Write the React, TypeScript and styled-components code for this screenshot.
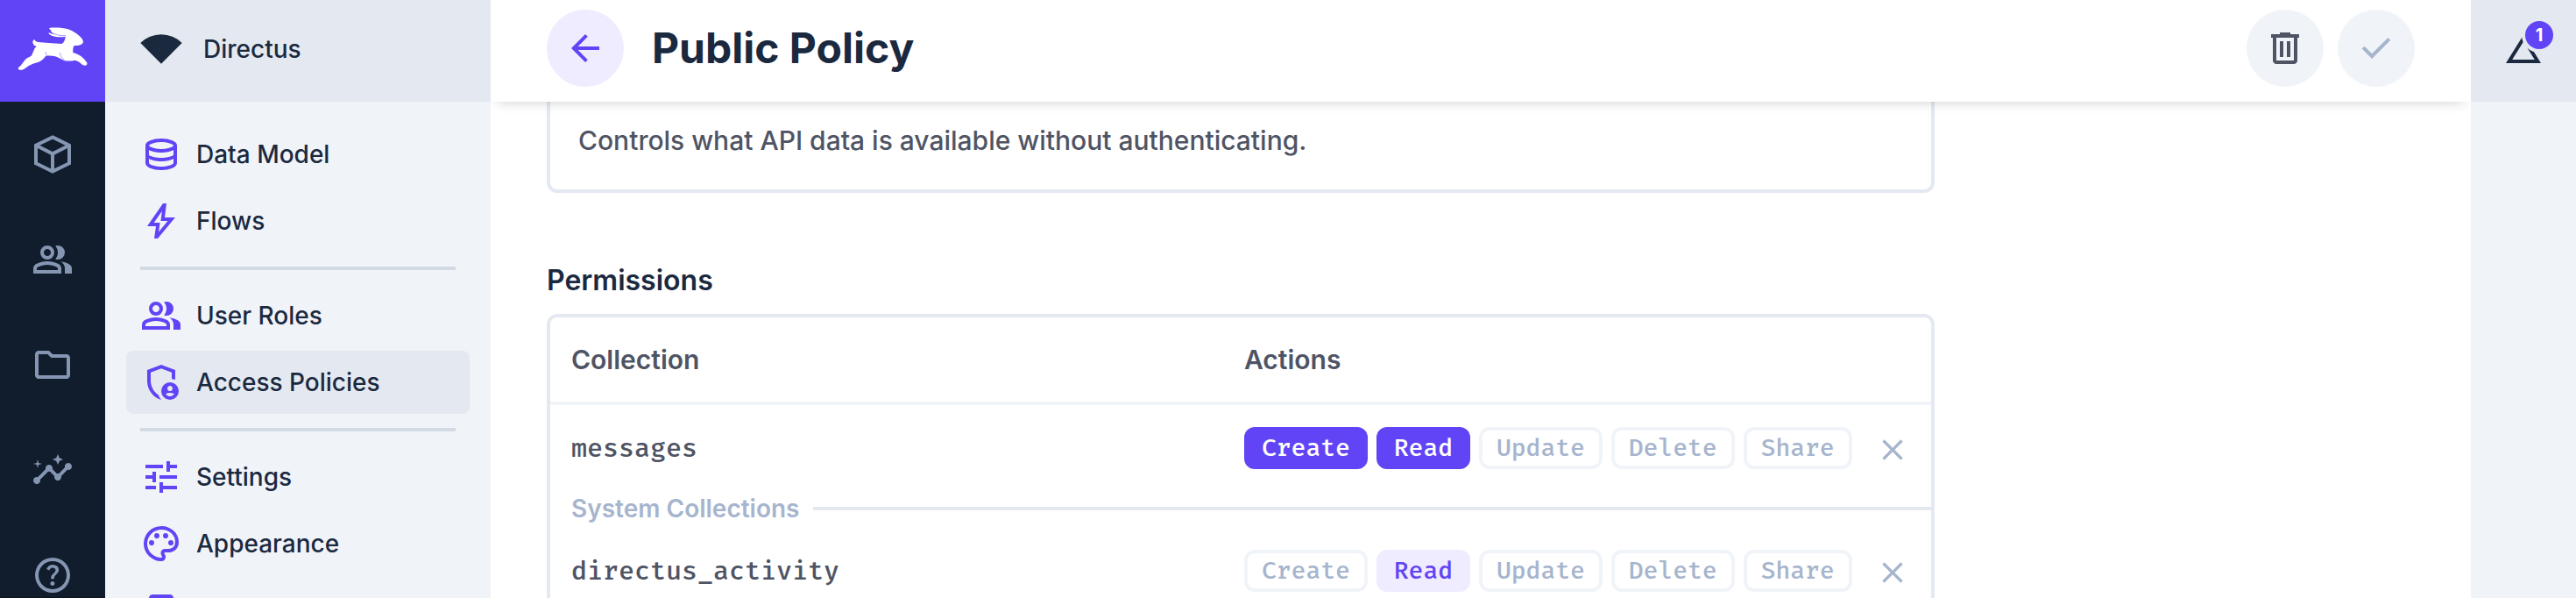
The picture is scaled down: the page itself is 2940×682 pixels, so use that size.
import React from 'react';
import styled, { createGlobalStyle, css } from 'styled-components';
import { MdInsights, MdTune } from 'react-icons/md';

const c = {
  primary: '#6144f6',
  primarySoft: '#f0ecff',
  rail: '#111c2c',
  railEdge: '#0d1521',
  railIcon: '#8496b2',
  subtle: '#f0f4f9',
  normal: '#e4e9f1',
  accent: '#d3dae4',
  strong: '#1b293f',
  text: '#4f5464',
  subdued: '#a6b5cd',
};
const sans = `Inter, "Liberation Sans", sans-serif`;
const mono = `"Fira Mono", "DejaVu Sans Mono", monospace`;

const Global = createGlobalStyle`
  *, *::before, *::after { box-sizing: border-box; }
  body { margin: 0; background: #fff; color: ${c.text}; font: 500 28px/40px ${sans}; }
  button { font: inherit; border: 0; padding: 0; background: none; cursor: pointer; }
  a { color: inherit; text-decoration: none; }
`;

const Page = styled.div`
  display: flex;
  height: 100vh;
  overflow: hidden;
`;

const Rail = styled.nav`
  flex: 0 0 120px;
  background: ${c.rail};
  border-bottom: 1px solid ${c.railEdge};
  overflow: hidden;
`;
const Logo = styled.a`
  display: flex;
  align-items: center;
  justify-content: center;
  height: 116px;
  padding-bottom: 4px;
  background: ${c.primary};
  color: #fff;
`;
const RailLink = styled.a`
  display: flex;
  align-items: center;
  justify-content: center;
  height: 120px;
  color: ${c.railIcon};
`;

const Nav = styled.nav`
  flex: 0 0 440px;
  background: ${c.subtle};
  color: ${c.strong};
  overflow: hidden;
`;
const Project = styled.div`
  display: flex;
  align-items: center;
  gap: 24px;
  height: 116px;
  padding: 0 40px 4px;
  background: ${c.normal};
`;
const NavList = styled.div`
  display: flex;
  flex-direction: column;
  gap: 4px;
  padding: 24px;
`;
const NavLink = styled.a<{ $active?: boolean }>`
  display: flex;
  align-items: center;
  gap: 16px;
  height: 72px;
  padding: 0 16px;
  border-radius: 8px;
  background: ${(p) => (p.$active ? c.normal : 'transparent')};
  svg { color: ${c.primary}; }
`;
const Divider = styled.hr`
  width: auto;
  height: 4px;
  margin: 12px 16px;
  border: 0;
  background: ${c.accent};
`;

const Main = styled.main`
  flex: 1;
  min-width: 0;
  overflow: hidden;
`;
const Header = styled.header`
  position: relative;
  z-index: 1;
  display: flex;
  align-items: center;
  gap: 16px;
  height: 116px;
  padding: 0 64px 6px;
  background: #fff;
  box-shadow: 0 8px 14px -8px rgba(0, 0, 0, 0.2);
`;
const Title = styled.h1`
  flex: 1;
  margin: 0 0 0 16px;
  color: ${c.strong};
  font-size: 48px;
  line-height: 56px;
  font-weight: 700;
`;
const RoundButton = styled.button<{ $kind: 'primary' | 'plain' | 'disabled' }>`
  display: flex;
  align-items: center;
  justify-content: center;
  width: 88px;
  height: 88px;
  border-radius: 50%;
  background: ${(p) => (p.$kind === 'primary' ? c.primarySoft : c.subtle)};
  color: ${(p) => ({ primary: c.primary, plain: c.text, disabled: c.subdued })[p.$kind]};
`;

const Form = styled.div`
  max-width: 1712px;
  padding: 0 64px;
`;
const Description = styled.textarea`
  display: block;
  width: 100%;
  height: 104px;
  padding: 22px 32px;
  border: 4px solid ${c.normal};
  border-top: 0;
  border-radius: 0 0 12px 12px;
  background: #fff;
  color: ${c.text};
  font: 500 30px/44px ${sans};
  resize: none;
  outline: 0;
  overflow: hidden;
`;
const Label = styled.h2`
  margin: 78px 0 16px;
  color: ${c.strong};
  font-size: 32px;
  line-height: 44px;
  font-weight: 600;
`;
const Frame = styled.div`
  border: 4px solid ${c.normal};
  border-radius: 12px;
  overflow: hidden;
`;
const Table = styled.table`
  width: 100%;
  table-layout: fixed;
  border-spacing: 0;
`;
const Col = styled.col<{ $w?: number }>`
  ${(p) => p.$w && css`width: ${p.$w}px;`}
`;
const HeadCell = styled.th`
  height: 100px;
  padding: 0;
  border-bottom: 4px solid ${c.subtle};
  text-align: left;
  font-size: 30px;
  font-weight: 600;
  &:first-child { padding-left: 24px; }
`;
const Cell = styled.td`
  height: 98px;
  padding: 0;
`;
const NameCell = styled(Cell)`
  padding-left: 24px;
  font-family: ${mono};
  font-size: 30px;
`;
const GroupCell = styled.td`
  height: 42px;
  padding: 0 0 2px 24px;
`;
const Group = styled.div`
  display: flex;
  align-items: center;
  gap: 16px;
  color: ${c.subdued};
  font-weight: 600;
  &::after { content: ''; flex: 1; height: 4px; background: ${c.normal}; }
`;
const Chips = styled.div`
  display: flex;
  gap: 10px;
`;
type Level = 'none' | 'full' | 'app';
const Chip = styled.button<{ $level: Level }>`
  height: 48px;
  padding: 0 16px;
  border: 4px solid;
  border-radius: 12px;
  font: 500 28px/40px ${mono};
  ${(p) => ({
    none: css`background: #fff; border-color: ${c.subtle}; color: ${c.subdued};`,
    full: css`background: ${c.primary}; border-color: ${c.primary}; color: #fff;`,
    app: css`background: ${c.primarySoft}; border-color: ${c.primarySoft}; color: ${c.primary};`,
  })[p.$level]}
`;
const Remove = styled.button`
  display: block;
  height: 44px;
  padding: 4px 10px 0;
  color: ${c.subdued};
  svg { display: block; }
`;

const Sidebar = styled.aside`
  flex: 0 0 120px;
  background: ${c.subtle};
`;
const SidebarHead = styled.button`
  display: flex;
  align-items: center;
  justify-content: center;
  width: 100%;
  height: 116px;
  padding-bottom: 4px;
  background: ${c.normal};
  color: ${c.strong};
`;
const BadgeAnchor = styled.span`
  position: relative;
  display: flex;
`;
const Badge = styled.span`
  position: absolute;
  top: -8px;
  right: -10px;
  width: 32px;
  height: 32px;
  border-radius: 50%;
  background: ${c.primary};
  box-shadow: 0 0 0 4px ${c.normal};
  color: #fff;
  font-size: 20px;
  line-height: 32px;
  font-weight: 700;
  text-align: center;
`;

const paths = {
  people: 'M1 20v-2.8q0-.85.438-1.562T2.6 14.55q1.55-.775 3.15-1.163T9 13t3.25.388t3.15 1.162q.725.375 1.163 1.088T17 17.2V20zm18 0v-3q0-1.1-.612-2.113T16.65 13.15q1.275.15 2.4.513t2.1.887q.9.5 1.375 1.112T23 17v3zM9 12q-1.65 0-2.825-1.175T5 8t1.175-2.825T9 4t2.825 1.175T13 8t-1.175 2.825T9 12m10-4q0 1.65-1.175 2.825T15 12q-.275 0-.7-.062t-.7-.138q.675-.8 1.038-1.775T15 8t-.362-2.025T13.6 4.2q.35-.125.7-.163T15 4q1.65 0 2.825 1.175T19 8M3 18h12v-.8q0-.275-.137-.5t-.363-.35q-1.35-.675-2.725-1.012T9 15t-2.775.338T3.5 16.35q-.225.125-.363.35T3 17.2zm6-8q.825 0 1.413-.587T11 8t-.587-1.412T9 6t-1.412.588T7 8t.588 1.413T9 10',
  folder: 'M4 20q-.825 0-1.412-.587T2 18V6q0-.825.588-1.412T4 4h6l2 2h8q.825 0 1.413.588T22 8v10q0 .825-.587 1.413T20 20zm0-2h16V8h-8.825l-2-2H4z',
  help: 'M11.95 18q.525 0 .888-.363t.362-.887t-.362-.888t-.888-.362t-.887.363t-.363.887t.363.888t.887.362m-.9-3.85h1.85q0-.825.188-1.3t1.062-1.3q.65-.65 1.025-1.238T15.55 8.9q0-1.4-1.025-2.15T12.1 6q-1.425 0-2.312.75T8.55 8.55l1.65.65q.125-.45.563-.975T12.1 7.7q.8 0 1.2.438t.4.962q0 .5-.3.938t-.75.812q-1.1.975-1.35 1.475t-.25 1.825M12 22q-2.075 0-3.9-.788t-3.175-2.137T2.788 15.9T2 12t.788-3.9t2.137-3.175T8.1 2.788T12 2t3.9.788t3.175 2.137T21.213 8.1T22 12t-.788 3.9t-2.137 3.175t-3.175 2.138T12 22m0-2q3.35 0 5.675-2.325T20 12t-2.325-5.675T12 4T6.325 6.325T4 12t2.325 5.675T12 20',
  database: 'M12 21q-3.775 0-6.387-1.162T3 17V7q0-1.65 2.638-2.825T12 3t6.363 1.175T21 7v10q0 1.675-2.613 2.838T12 21m0-11.975q2.225 0 4.475-.638T19 7.025q-.275-.725-2.512-1.375T12 5q-2.275 0-4.462.638T5 7.025q.35.75 2.538 1.375T12 9.025M12 14q1.05 0 2.025-.1t1.863-.288t1.675-.462T19 12.525v-3q-.65.35-1.437.625t-1.675.463t-1.863.287T12 11t-2.05-.1t-1.888-.288T6.4 10.15T5 9.525v3q.625.35 1.4.625t1.663.463t1.887.287T12 14m0 5q1.15 0 2.338-.175t2.187-.462t1.675-.65t.8-.738v-2.45q-.65.35-1.437.625t-1.675.463t-1.863.287T12 16t-2.05-.1t-1.888-.288T6.4 15.15T5 14.525V17q.125.375.788.725t1.662.638t2.2.462T12 19',
  bolt: 'm10.55 18.2l5.175-6.2h-4l.725-5.675L7.825 13H11.3zM8 22l1-7H4l9-13h2l-1 8h6L10 22z',
  policy: 'M17 17q.625 0 1.063-.437T18.5 15.5t-.437-1.062T17 14t-1.062.438T15.5 15.5t.438 1.063T17 17m0 3q.775 0 1.425-.363t1.05-.962q-.55-.325-1.175-.5T17 18t-1.3.175t-1.175.5q.4.6 1.05.963T17 20m-5 2q-3.475-.875-5.737-3.988T4 11.1V5l8-3l8 3v5.675q-.475-.2-.975-.363T18 10.076V6.4l-6-2.25L6 6.4v4.7q0 1.175.313 2.35t.875 2.238T8.55 17.65t1.775 1.5q.275.8.725 1.525t1.025 1.3q-.025 0-.037.013T12 22m5 0q-2.075 0-3.537-1.463T12 17t1.463-3.537T17 12t3.538 1.463T22 17t-1.463 3.538T17 22',
  palette: 'M12 22q-2.05 0-3.875-.788t-3.187-2.15t-2.15-3.187T2 12q0-2.075.813-3.9t2.2-3.175T8.25 2.788T12.2 2q2 0 3.775.688t3.113 1.9t2.125 2.875T22 11.05q0 2.875-1.75 4.413T16 17h-1.85q-.225 0-.312.125t-.088.275q0 .3.375.863t.375 1.287q0 1.25-.687 1.85T12 22m-5.5-9q.65 0 1.075-.425T8 11.5t-.425-1.075T6.5 10t-1.075.425T5 11.5t.425 1.075T6.5 13m3-4q.65 0 1.075-.425T11 7.5t-.425-1.075T9.5 6t-1.075.425T8 7.5t.425 1.075T9.5 9m5 0q.65 0 1.075-.425T16 7.5t-.425-1.075T14.5 6t-1.075.425T13 7.5t.425 1.075T14.5 9m3 4q.65 0 1.075-.425T19 11.5t-.425-1.075T17.5 10t-1.075.425T16 11.5t.425 1.075T17.5 13M12 20q.225 0 .363-.125t.137-.325q0-.35-.375-.825T11.75 17.3q0-1.05.725-1.675T14.25 15H16q1.65 0 2.825-.962T20 11.05q0-3.025-2.312-5.038T12.2 4Q8.8 4 6.4 6.325T4 12q0 3.325 2.338 5.663T12 20',
  bookmark: 'M5 21V5q0-.825.588-1.412T7 3h10q.825 0 1.413.588T19 5v16l-7-3zm2-3.05l5-2.15l5 2.15V5H7z',
  back: 'm7.825 13l5.6 5.6L12 20l-8-8l8-8l1.425 1.4l-5.6 5.6H20v2z',
  trash: 'M7 21q-.825 0-1.412-.587T5 19V6H4V4h5V3h6v1h5v2h-1v13q0 .825-.587 1.413T17 21zM17 6H7v13h10zM9 17h2V8H9zm4 0h2V8h-2z',
  check: 'm9.55 18l-5.7-5.7l1.425-1.425L9.55 15.15l9.175-9.175L20.15 7.4z',
  close: 'M6.4 19L5 17.6l5.6-5.6L5 6.4L6.4 5l5.6 5.6L17.6 5L19 6.4L13.4 12l5.6 5.6l-1.4 1.4l-5.6-5.6z',
  triangle: 'M12 7.77L18.39 18H5.61L12 7.77M12 4L2 20h20z',
};

const Icon = ({ name, size = 48 }: { name: keyof typeof paths; size?: number }) => (
  <svg width={size} height={size} viewBox="0 0 24 24" fill="currentColor" fillRule="evenodd" aria-hidden="true">
    <path d={paths[name]} />
  </svg>
);

const RabbitLogo = () => (
  <svg width="80" height="50" viewBox="29 34 240 150" fill="#fff" aria-hidden="true">
    <path d="M138 37C152 34 178 36 196 39C214 43 230 54 241 64C250 72 254 80 254 85C252 92 246 95 238 96L222 98C219 104 218 112 219 121C228 124 240 129 246 133C254 139 262 149 266 154C269 159 267 164 262 165C257 166 252 163 248 160C241 153 234 149 226 147C214 150 202 150 190 149C180 144 168 138 158 134C148 131 138 131 126 132C118 144 108 152 92 156C80 158 70 164 60 171C52 177 44 182 36 180C30 178 30 172 36 169C42 164 48 154 56 144C62 138 70 136 76 132C82 124 84 108 94 99C86 98 81 92 81 84C81 78 87 74 89 78C90 82 94 84 100 85C120 87 150 89 180 91C188 86 192 78 193 66C178 70 156 68 140 60C134 56 135 52 138 53C144 57 152 59 160 60C148 56 142 49 144 45C142 42 136 40 138 37Z" />
    <path d="M145 51C156 60 174 64 194 63M126 118C125 124 127 128 130 133M174 122C176 134 182 142 190 147" fill="none" stroke="#aa9bfa" strokeWidth="3" />
  </svg>
);

const BoxIcon = () => (
  <svg width="48" height="48" viewBox="0 0 24 24" fill="none" stroke="currentColor" strokeWidth="2" aria-hidden="true">
    <path d="M12 2.2 21.5 6.9V17.1L12 21.8 2.5 17.1V6.9ZM2.5 6.9 12 11.7 21.5 6.9M12 11.7V21.8" />
  </svg>
);

const FanIcon = () => (
  <svg width="48" height="34" viewBox="0 0 48 34" fill="currentColor" aria-hidden="true">
    <path d="M.3 10 24 33.7 47.7 10A33.6 33.6 0 0 0 .3 10Z" />
  </svg>
);

const actions = ['Create', 'Read', 'Update', 'Delete', 'Share'];

function PermissionRow({ name, levels }: { name: string; levels: Record<string, Level> }) {
  return (
    <tr>
      <NameCell>{name}</NameCell>
      <Cell>
        <Chips>
          {actions.map((a) => (
            <Chip key={a} type="button" $level={levels[a] ?? 'none'}>{a}</Chip>
          ))}
        </Chips>
      </Cell>
      <Cell>
        <Remove type="button"><Icon name="close" size={40} /></Remove>
      </Cell>
    </tr>
  );
}

export default function App() {
  return (
    <Page>
      <Global />
      <Rail>
        <Logo href="#"><RabbitLogo /></Logo>
        <RailLink href="#"><BoxIcon /></RailLink>
        <RailLink href="#"><Icon name="people" /></RailLink>
        <RailLink href="#"><Icon name="folder" /></RailLink>
        <RailLink href="#"><MdInsights size={48} /></RailLink>
        <RailLink href="#"><Icon name="help" /></RailLink>
      </Rail>
      <Nav>
        <Project><FanIcon />Directus</Project>
        <NavList>
          <NavLink href="#"><Icon name="database" />Data Model</NavLink>
          <NavLink href="#"><Icon name="bolt" />Flows</NavLink>
          <Divider />
          <NavLink href="#"><Icon name="people" />User Roles</NavLink>
          <NavLink href="#" $active><Icon name="policy" />Access Policies</NavLink>
          <Divider />
          <NavLink href="#"><MdTune size={48} />Settings</NavLink>
          <NavLink href="#"><Icon name="palette" />Appearance</NavLink>
          <NavLink href="#"><Icon name="bookmark" /></NavLink>
        </NavList>
      </Nav>
      <Main>
        <Header>
          <RoundButton type="button" $kind="primary"><Icon name="back" /></RoundButton>
          <Title>Public Policy</Title>
          <RoundButton type="button" $kind="plain"><Icon name="trash" /></RoundButton>
          <RoundButton type="button" $kind="disabled" disabled><Icon name="check" /></RoundButton>
        </Header>
        <Form>
          <Description rows={1} defaultValue="Controls what API data is available without authenticating." />
          <Label id="permissions">Permissions</Label>
          <Frame>
            <Table aria-labelledby="permissions">
              <colgroup><Col /><Col $w={710} /><Col $w={74} /></colgroup>
              <thead>
                <tr>
                  <HeadCell scope="col">Collection</HeadCell>
                  <HeadCell scope="col" colSpan={2}>Actions</HeadCell>
                </tr>
              </thead>
              <tbody>
                <PermissionRow name="messages" levels={{ Create: 'full', Read: 'full' }} />
                <tr>
                  <GroupCell colSpan={3}><Group>System Collections</Group></GroupCell>
                </tr>
                <PermissionRow name="directus_activity" levels={{ Read: 'app' }} />
              </tbody>
            </Table>
          </Frame>
        </Form>
      </Main>
      <Sidebar>
        <SidebarHead type="button">
          <BadgeAnchor><Icon name="triangle" /><Badge>1</Badge></BadgeAnchor>
        </SidebarHead>
      </Sidebar>
    </Page>
  );
}
